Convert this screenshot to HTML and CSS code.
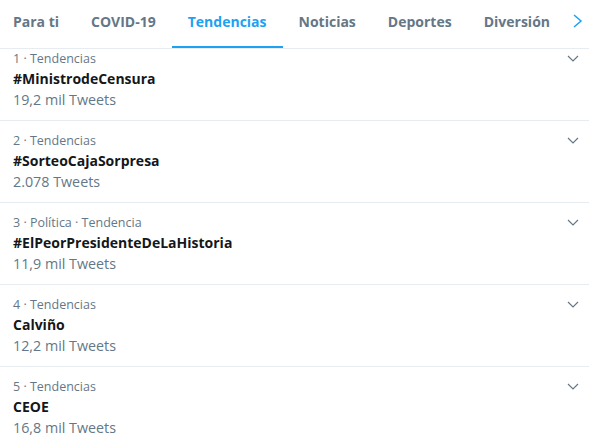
FILE: index.html
```html
<!DOCTYPE html>
<html lang="es">
<head>
<meta charset="utf-8">
<title>Tendencias</title>
<link rel="stylesheet" href="styles.css">
</head>
<body>
<div class="page">
  <nav class="tabs">
    <a class="tab first">Para ti</a>
    <a class="tab">COVID-19</a>
    <a class="tab active">Tendencias</a>
    <a class="tab">Noticias</a>
    <a class="tab">Deportes</a>
    <a class="tab">Diversión</a>
    <span class="next">
      <svg width="12" height="14" viewBox="0 0 12 14"><polyline points="2,1 9,7 2,13" fill="none" stroke="#1da1f2" stroke-width="1.5"/></svg>
    </span>
  </nav>
  <ul class="list">
    <li class="trend first">
      <div class="meta">1 · Tendencias</div>
      <div class="title">#MinistrodeCensura</div>
      <div class="count">19,2 mil Tweets</div>
      <span class="caret"><svg width="12" height="7" viewBox="0 0 12 7"><polyline points="1,1 6,6 11,1" fill="none" stroke="#657786" stroke-width="1.2"/></svg></span>
    </li>
    <li class="trend">
      <div class="meta">2 · Tendencias</div>
      <div class="title">#SorteoCajaSorpresa</div>
      <div class="count">2.078 Tweets</div>
      <span class="caret"><svg width="12" height="7" viewBox="0 0 12 7"><polyline points="1,1 6,6 11,1" fill="none" stroke="#657786" stroke-width="1.2"/></svg></span>
    </li>
    <li class="trend">
      <div class="meta">3 · Política · Tendencia</div>
      <div class="title">#ElPeorPresidenteDeLaHistoria</div>
      <div class="count">11,9 mil Tweets</div>
      <span class="caret"><svg width="12" height="7" viewBox="0 0 12 7"><polyline points="1,1 6,6 11,1" fill="none" stroke="#657786" stroke-width="1.2"/></svg></span>
    </li>
    <li class="trend">
      <div class="meta">4 · Tendencias</div>
      <div class="title">Calviño</div>
      <div class="count">12,2 mil Tweets</div>
      <span class="caret"><svg width="12" height="7" viewBox="0 0 12 7"><polyline points="1,1 6,6 11,1" fill="none" stroke="#657786" stroke-width="1.2"/></svg></span>
    </li>
    <li class="trend">
      <div class="meta">5 · Tendencias</div>
      <div class="title">CEOE</div>
      <div class="count">16,8 mil Tweets</div>
      <span class="caret"><svg width="12" height="7" viewBox="0 0 12 7"><polyline points="1,1 6,6 11,1" fill="none" stroke="#657786" stroke-width="1.2"/></svg></span>
    </li>
  </ul>
</div>
</body>
</html>
```

FILE: styles.css
```css
html, body {
  margin: 0;
  padding: 0;
  overflow: hidden;
  background: #fff;
}
.page {
  font-family: "Open Sans", "Noto Sans", sans-serif;
  color: #14171a;
  width: 589px;
}
.tabs {
  position: relative;
  display: flex;
  height: 48px;
  border-bottom: 1px solid #e6ecf0;
}
.tab {
  position: relative;
  display: flex;
  align-items: center;
  padding: 0 16px 5px;
  font-size: 14px;
  font-weight: 700;
  color: #657786;
  white-space: nowrap;
}
.tab.first {
  padding-left: 13px;
}
.tab.active {
  color: #1da1f2;
}
.tab.active::after {
  content: "";
  position: absolute;
  left: 0;
  right: 0;
  bottom: 0;
  height: 2px;
  background: #1da1f2;
}
.next {
  position: absolute;
  right: 0;
  top: 0;
  bottom: 0;
  width: 17px;
  display: flex;
  align-items: center;
  background: #fff;
  padding-bottom: 6px;
}
.list {
  list-style: none;
  margin: 0;
  padding: 0;
}
.trend {
  position: relative;
  padding: 10px 15px 10px 13px;
  border-bottom: 1px solid #e6ecf0;
}
.trend.first {
  padding-top: 0;
}
.meta {
  font-size: 12.5px;
  line-height: 20px;
  color: #657786;
}
.title {
  font-size: 14px;
  font-weight: 700;
  line-height: 20px;
}
.count {
  font-size: 14.3px;
  line-height: 21px;
  color: #657786;
}
.caret {
  position: absolute;
  right: 10px;
  top: 16px;
  display: flex;
}
.trend.first .caret {
  top: 6px;
}
```
